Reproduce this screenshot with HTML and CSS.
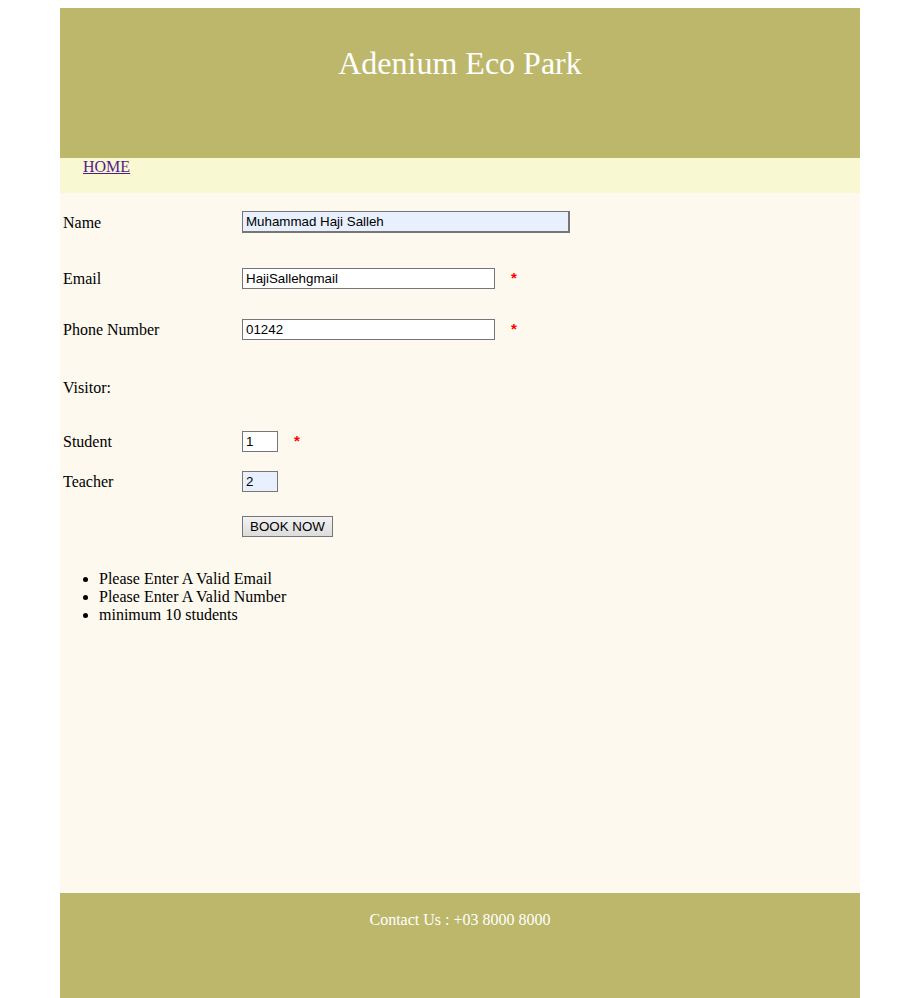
FILE: index.html
```html
<!DOCTYPE html>
<html>
<head>
<meta charset="utf-8">
<title>Adenium Eco Park</title>
<link rel="stylesheet" href="styles.css">
</head>
<body>
<div class="page">
  <header class="header">
    <h1 class="title">Adenium Eco Park</h1>
  </header>
  <nav class="nav"><a href="#" class="nav-link">HOME</a></nav>
  <main class="main">
    <form class="form">
      <div class="row r1"><span class="label">Name</span><input class="field wide autofill focus" type="text" value="Muhammad Haji Salleh"></div>
      <div class="row r2"><span class="label">Email</span><input class="field medium" type="text" value="HajiSallehgmail"><span class="req">*</span></div>
      <div class="row r3"><span class="label">Phone Number</span><input class="field medium" type="text" value="01242"><span class="req">*</span></div>
      <div class="row r4"><span class="label">Visitor:</span></div>
      <div class="row r5"><span class="label">Student</span><input class="field small" type="text" value="1"><span class="req">*</span></div>
      <div class="row r6"><span class="label">Teacher</span><input class="field small autofill" type="text" value="2"></div>
      <div class="row r7"><span class="label"></span><button class="btn" type="button">BOOK NOW</button></div>
    </form>
    <ul class="errors">
      <li>Please Enter A Valid Email</li>
      <li>Please Enter A Valid Number</li>
      <li>minimum 10 students</li>
    </ul>
  </main>
  <footer class="footer">Contact Us : +03 8000 8000</footer>
</div>
</body>
</html>
```
FILE: styles.css
```css
html, body {
  margin: 0;
  padding: 0;
  background: #ffffff;
}
body {
  padding: 8px 0;
  font-family: "Liberation Serif", "Times New Roman", serif;
  font-size: 16px;
  color: #000;
}
.page {
  width: 800px;
  margin: 0 0 0 60px;
}
.header {
  height: 150px;
  background: #bdb76b;
  box-sizing: border-box;
  padding-top: 37px;
}
.title {
  margin: 0;
  text-align: center;
  color: #ffffff;
  font-weight: normal;
  font-size: 32px;
  line-height: 37px;
}
.nav {
  height: 35px;
  background: #f8f8d2;
  box-sizing: border-box;
  padding: 0 0 0 23px;
  line-height: 18px;
}
.nav-link {
  color: #551a8b;
  text-decoration: underline;
}
.main {
  background: #fdf9ef;
  height: 700px;
  box-sizing: border-box;
  padding-top: 18px;
}
.form {
  display: flex;
  flex-direction: column;
  margin: 0;
}
.row {
  display: flex;
  align-items: center;
  height: 22px;
}
.r2 { margin-top: 34px; }
.r3 { margin-top: 29px; }
.r4 { margin-top: 36px; }
.r5 { margin-top: 32px; }
.r6 { margin-top: 18px; }
.r7 { margin-top: 23px; }
.label {
  width: 182px;
  padding-left: 3px;
  flex-shrink: 0;
  box-sizing: border-box;
  position: relative;
  top: 1px;
}
.field {
  box-sizing: border-box;
  height: 21px;
  border: 1px solid #767676;
  background: #ffffff;
  font-family: "Liberation Sans", Arial, sans-serif;
  font-size: 13.33px;
  color: #000;
  padding: 1px 3px;
  margin: 0;
}
.wide { width: 328px; height: 22px; }
.medium { width: 253px; }
.small { width: 36px; }
.autofill { background: #e8f0fe; }
.focus {
  border-right-width: 2px;
  border-bottom-width: 2px;
}
.req {
  color: #ff0000;
  font-family: "Liberation Sans", Arial, sans-serif;
  font-size: 15px;
  font-weight: bold;
  margin-left: 16px;
  position: relative;
  top: -1px;
}
.btn {
  box-sizing: border-box;
  width: 91px;
  height: 21px;
  margin: 0;
  padding: 1px 6px;
  font-family: "Liberation Sans", Arial, sans-serif;
  font-size: 13.33px;
  color: #000;
  border: 1px solid #767676;
  border-radius: 0;
  background-image: linear-gradient(#f2f2f2, #dcdcdc);
}
.errors {
  margin: 33px 0 0;
  padding-left: 39px;
  line-height: 18px;
}
.footer {
  height: 105px;
  background: #bdb76b;
  color: #ffffff;
  text-align: center;
  box-sizing: border-box;
  padding-top: 18px;
  line-height: 18px;
}
```
